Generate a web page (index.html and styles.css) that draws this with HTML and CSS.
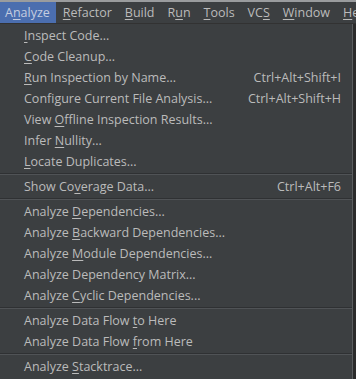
FILE: index.html
```html
<!DOCTYPE html>
<html lang="en">
<head>
    <meta charset="UTF-8">
    <title>Analyze menu</title>
    <link rel="stylesheet" href="styles.css">
</head>
<body>
    <div class="menubar">
        <span class="top active">A<u>n</u>alyze</span>
        <span class="top"><u>R</u>efactor</span>
        <span class="top"><u>B</u>uild</span>
        <span class="top">R<u>u</u>n</span>
        <span class="top"><u>T</u>ools</span>
        <span class="top">VC<u>S</u></span>
        <span class="top"><u>W</u>indow</span>
        <span class="top"><u>H</u>elp</span>
    </div>
    <div class="screen">
        <div class="popup">
            <div class="item"><span><u>I</u>nspect Code...</span></div>
            <div class="item"><span><u>C</u>ode Cleanup...</span></div>
            <div class="item"><span><u>R</u>un Inspection by Name...</span><span class="key">Ctrl+Alt+Shift+I</span></div>
            <div class="item"><span>Configure Current File Analysis...</span><span class="key">Ctrl+Alt+Shift+H</span></div>
            <div class="item"><span>View <u>O</u>ffline Inspection Results...</span></div>
            <div class="item"><span>Infer <u>N</u>ullity...</span></div>
            <div class="item"><span><u>L</u>ocate Duplicates...</span></div>
            <div class="sep"></div>
            <div class="item"><span>Show Co<u>v</u>erage Data...</span><span class="key">Ctrl+Alt+F6</span></div>
            <div class="sep"></div>
            <div class="item"><span>Analyze <u>D</u>ependencies...</span></div>
            <div class="item"><span>Analyze <u>B</u>ackward Dependencies...</span></div>
            <div class="item"><span>Analyze <u>M</u>odule Dependencies...</span></div>
            <div class="item"><span>Analyze Dependency Matrix...</span></div>
            <div class="item"><span>Analyze <u>C</u>yclic Dependencies...</span></div>
            <div class="sep"></div>
            <div class="item"><span>Analyze Data Flow <u>t</u>o Here</span></div>
            <div class="item"><span>Analyze Data Flow <u>f</u>rom Here</span></div>
            <div class="sep"></div>
            <div class="item"><span>Analyze <u>S</u>tacktrace...</span></div>
        </div>
        <div class="editor"></div>
    </div>
</body>
</html>
```

FILE: styles.css
```css
body {
    margin: 0;
    background: #2b2b2b;
    font-family: "Open Sans", "Noto Sans", sans-serif;
    font-size: 12.5px;
    color: #bbbbbb;
    width: 356px;
    height: 379px;
    overflow: hidden;
}

u {
    text-decoration: underline;
    text-underline-offset: 2px;
}

.menubar {
    display: flex;
    height: 21px;
    background: #3c3f41;
    border-top: 2px solid #9a9c9e;
    border-bottom: 1px solid #323232;
    white-space: nowrap;
    overflow: hidden;
}

.top {
    display: flex;
    align-items: center;
    padding: 0 6px 0 7px;
    font-size: 12.5px;
}

.top.active {
    background: #4b6eaf;
    color: #c5cde0;
    padding: 0 6px 0 5px;
}

.screen {
    display: flex;
    height: 355px;
}

.popup {
    width: 352px;
    background: #3c3f41;
    border-right: 1px solid #5a5d5f;
    padding-top: 1px;
}

.editor {
    flex: 1;
    background: #2b2b2b;
}

.item {
    display: flex;
    justify-content: space-between;
    align-items: center;
    height: 21px;
    padding: 0 11px 0 24px;
    white-space: nowrap;
}

.key {
    color: #bbbbbb;
}

.sep {
    height: 1px;
    margin: 1px 0 1px 0;
    background: #2f3133;
    border-bottom: 1px solid #505356;
}
```
